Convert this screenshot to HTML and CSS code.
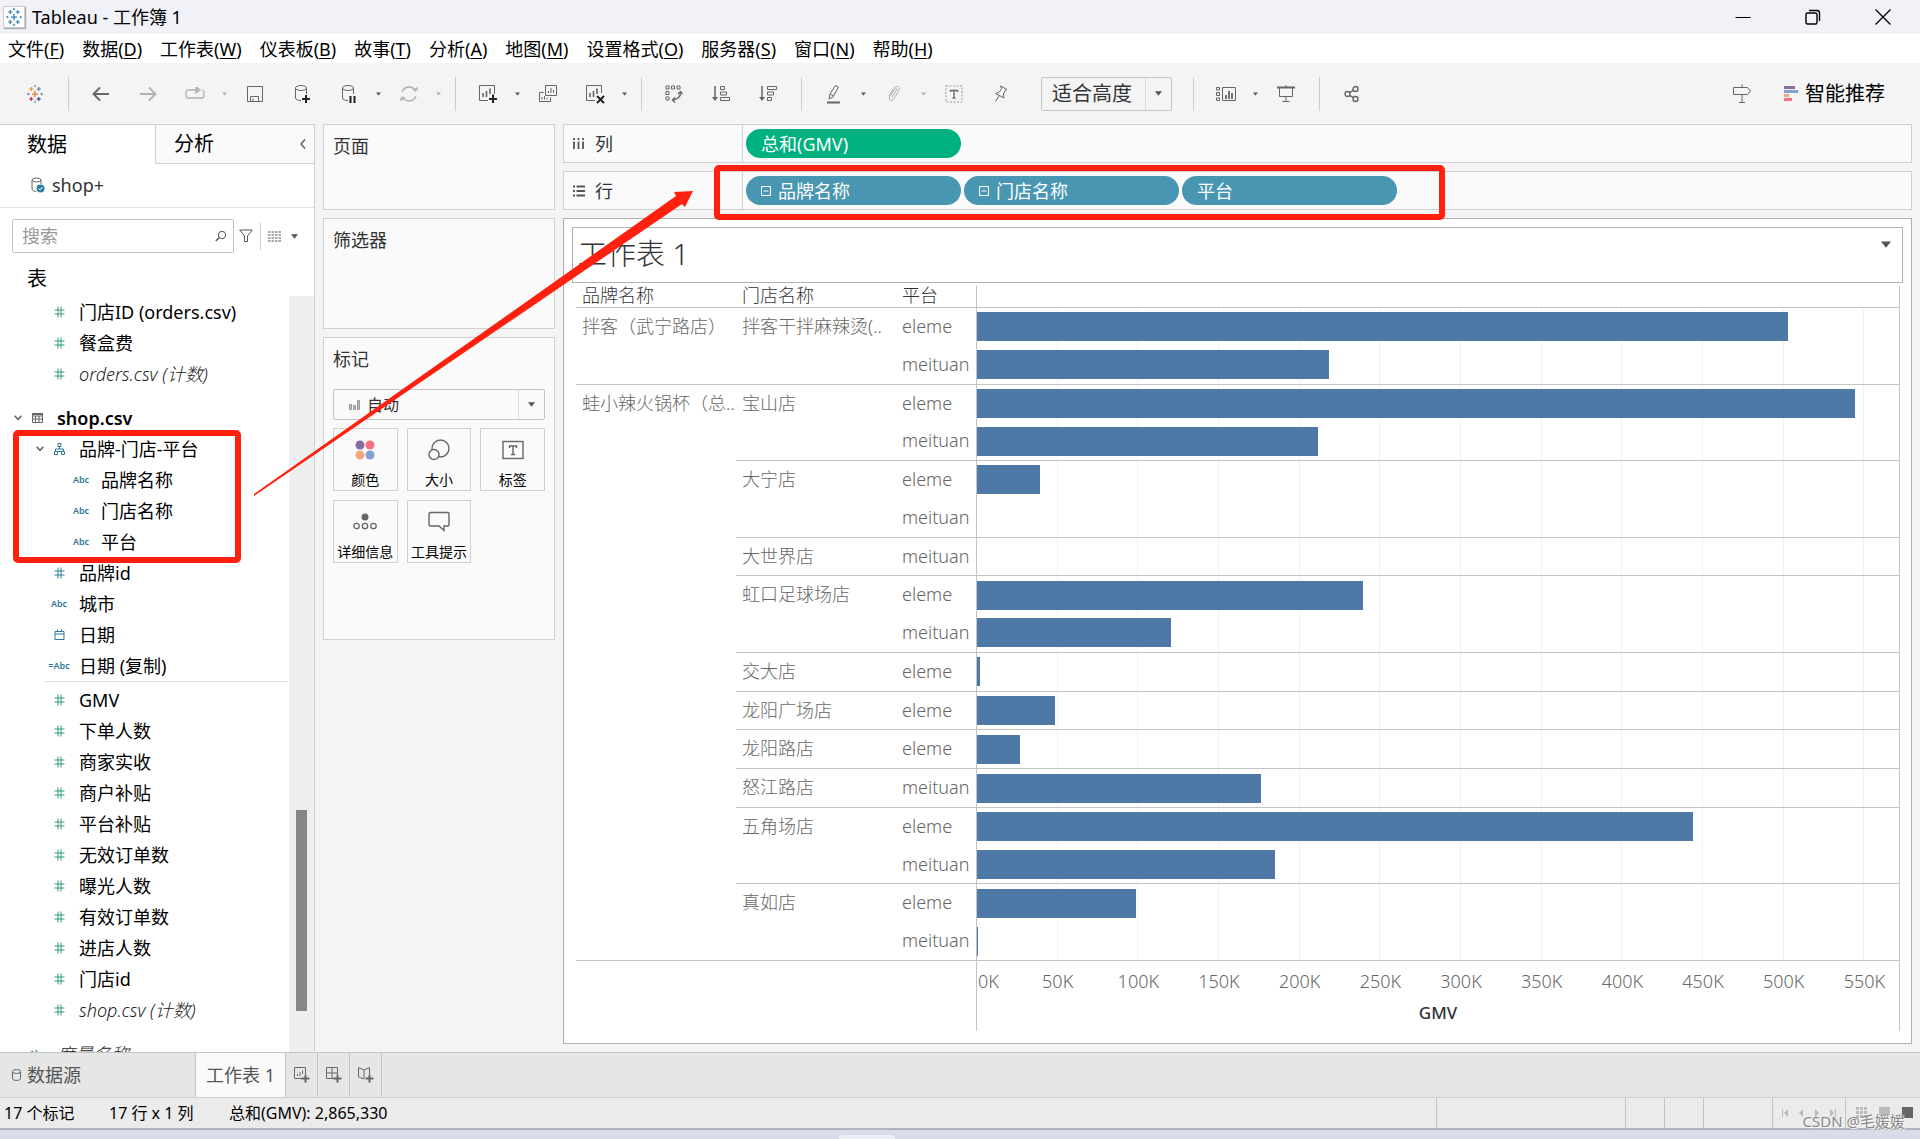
FILE: index.html
```html
<!DOCTYPE html>
<html lang="zh-CN">
<head>
<meta charset="utf-8">
<title>Tableau - 工作簿 1</title>
<link rel="stylesheet" href="styles.css">
</head>
<body>
<svg class="defs" aria-hidden="true">
  <symbol id="caret" viewBox="0 0 8 5"><path d="M0 0H8L4 5Z" fill="currentColor"/></symbol>
  <symbol id="hash" viewBox="0 0 10 12"><path d="M3.5 0.5V11.5M6.5 0.5V11.5M0 4H10M0 8H10" stroke="currentColor" fill="none"/></symbol>
  <symbol id="chev" viewBox="0 0 8 6"><path d="M0.7 0.8L4 4.4L7.3 0.8" stroke="#555" stroke-width="1.4" fill="none"/></symbol>
  <symbol id="minusbox" viewBox="0 0 10 10"><path d="M0.5 0.5H9.5V9.5H0.5ZM2.5 5H7.5" stroke="#fff" fill="none"/></symbol>
  <symbol id="logo" viewBox="0 0 20 24">
    <path d="M10 8V16M6.5 12H13.5" stroke="var(--c1,#e8762c)" stroke-width="1.5"/>
    <path d="M5.5 3.5V8.5M3 6H8" stroke="var(--c2,#eb912c)" stroke-width="1.4"/>
    <path d="M14.5 3.5V8.5M12 6H17" stroke="var(--c3,#59879b)" stroke-width="1.4"/>
    <path d="M5.5 15.5V20.5M3 18H8" stroke="var(--c4,#c72037)" stroke-width="1.4"/>
    <path d="M14.5 15.5V20.5M12 18H17" stroke="var(--c5,#1f457e)" stroke-width="1.4"/>
    <path d="M10 1V4M8.5 2.5H11.5M10 20V23M8.5 21.5H11.5" stroke="var(--c6,#7199a6)"/>
    <path d="M2 10.5V13.5M0.5 12H3.5M18 10.5V13.5M16.5 12H19.5" stroke="var(--c7,#5b6591)"/>
  </symbol>
</svg>

<div class="app">
  <header class="titlebar">
    <span class="appicon"><svg width="18" height="20"><use href="#logo"/></svg></span>
    <h1>Tableau - 工作簿 1</h1>
    <div class="winbtns">
      <button aria-label="最小化"><svg width="16" height="16" viewBox="0 0 16 16"><path d="M0.5 8.5H15.5" stroke="#000"/></svg></button>
      <button aria-label="还原"><svg width="16" height="16" viewBox="0 0 16 16" fill="none" stroke="#000" stroke-width="1.4"><rect x="1" y="4" width="11" height="11" rx="1.5"/><path d="M4 1.5H12Q14.5 1.5 14.5 4V12"/></svg></button>
      <button aria-label="关闭"><svg width="16" height="16" viewBox="0 0 16 16"><path d="M0.5 0.5L15.5 15.5M15.5 0.5L0.5 15.5" stroke="#000" stroke-width="1.3"/></svg></button>
    </div>
  </header>

  <nav class="menubar">
    <button>文件(<u>F</u>)</button><button>数据(<u>D</u>)</button><button>工作表(<u>W</u>)</button><button>仪表板(<u>B</u>)</button><button>故事(<u>T</u>)</button><button>分析(<u>A</u>)</button><button>地图(<u>M</u>)</button><button>设置格式(<u>O</u>)</button><button>服务器(<u>S</u>)</button><button>窗口(<u>N</u>)</button><button>帮助(<u>H</u>)</button>
  </nav>

  <div class="toolbar">
    <button class="tool" aria-label="起始页"><svg width="18" height="20"><use href="#logo"/></svg></button>
    <i class="sep"></i>
    <button class="tool" aria-label="撤消"><svg width="18" height="16" viewBox="0 0 18 16"><path d="M17 8H2M8 1.5L1.5 8L8 14.5" stroke-width="2"/></svg></button>
    <button class="tool off" aria-label="重做"><svg width="18" height="16" viewBox="0 0 18 16"><path d="M1 8H16M10 1.5L16.5 8L10 14.5" stroke-width="1.8"/></svg></button>
    <span class="split off"><button class="tool" aria-label="重播"><svg width="20" height="14" viewBox="0 0 20 14"><path d="M13 3H3.5Q1 3 1 5.5V8.5Q1 11 3.5 11H16.5Q19 11 19 8.5V5.5Q19 4 17.5 3.4M11 0V6L15 3Z" stroke-width="1.3"/></svg></button><button class="drop" aria-label="更多"><svg><use href="#caret"/></svg></button></span>
    <button class="tool" aria-label="保存"><svg width="16" height="16" viewBox="0 0 16 16"><path d="M0.5 0.5H15.5V15.5H0.5ZM3.5 15V10.5H11.5V15M6 12.5V15"/></svg></button>
    <button class="tool" aria-label="新建数据源"><svg width="16" height="20" viewBox="0 0 16 20"><ellipse cx="7" cy="4" rx="5.5" ry="2.5"/><path d="M1.5 4V14Q2 16.5 7 16.5M12.5 4V10"/><path d="M12 11V19M8 15H16" stroke="#222" stroke-width="2"/></svg></button>
    <span class="split"><button class="tool" aria-label="暂停更新"><svg width="16" height="20" viewBox="0 0 16 20"><ellipse cx="7" cy="4" rx="5.5" ry="2.5"/><path d="M1.5 4V14Q2 16.5 7 16.5M12.5 4V10"/><path d="M9.5 12V19M13.5 12V19" stroke="#222" stroke-width="2"/></svg></button><button class="drop" aria-label="更多"><svg><use href="#caret"/></svg></button></span>
    <span class="split off"><button class="tool" aria-label="运行更新"><svg width="18" height="16" viewBox="0 0 18 16"><path d="M2 6Q4 1 9 1Q13.5 1 15.5 5.5M16 10Q14 15 9 15Q4.5 15 2.5 10.5" stroke-width="1.4"/><path d="M12.5 4.5H17.5V0.5ZM5.5 11.5H0.5V15.5Z" fill="currentColor" stroke="none"/></svg></button><button class="drop" aria-label="更多"><svg><use href="#caret"/></svg></button></span>
    <i class="sep"></i>
    <span class="split"><button class="tool" aria-label="新建工作表"><svg width="20" height="20" viewBox="0 0 20 20"><path d="M10 16.5H1.5V1.5H16.5V10"/><path d="M5 13V9M8.5 13V7M12 10V4.5" stroke-width="1.6"/><path d="M15 10.5V19M11 15H19" stroke="#222" stroke-width="2"/></svg></button><button class="drop" aria-label="更多"><svg><use href="#caret"/></svg></button></span>
    <button class="tool" aria-label="复制工作表"><svg width="18" height="18" viewBox="0 0 18 18"><path d="M6.5 0.5H17.5V10.5H6.5ZM4.5 7.5H0.5V16.5H11.5V12.5M9.5 8V6M12 8V3M14.5 8V5M3 14.5V12M5.5 14.5V11M8 14.5V12.5"/></svg></button>
    <span class="split"><button class="tool" aria-label="清除工作表"><svg width="20" height="20" viewBox="0 0 20 20"><path d="M10 16.5H1.5V1.5H16.5V9"/><path d="M5 13V9M8.5 13V7M12 10V4.5" stroke-width="1.6"/><path d="M12 12L19 19M19 12L12 19" stroke="#222" stroke-width="2"/></svg></button><button class="drop" aria-label="更多"><svg><use href="#caret"/></svg></button></span>
    <i class="sep"></i>
    <button class="tool" aria-label="交换行和列"><svg width="18" height="18" viewBox="0 0 18 18"><path d="M1 1H4V4H1ZM6.5 1H9.5V4H6.5ZM12 1H15V4H12ZM1 6.5H4V9.5H1ZM1 12H4V15H1Z"/><path d="M15.5 7Q16 13.5 8 15M13 9L15.5 6.5L17.5 9M10 12.5L7.5 15L10 17.5" stroke-width="1.4"/></svg></button>
    <button class="tool" aria-label="升序排序"><svg width="18" height="18" viewBox="0 0 18 18"><path d="M3 1V15" stroke-width="1.5"/><path d="M0 12H6L3 16Z" fill="currentColor" stroke="none"/><path d="M8.5 1.5H12.5V4.5H8.5ZM8.5 7H14.5V10H8.5ZM8.5 12.5H17.5V15.5H8.5Z"/></svg></button>
    <button class="tool" aria-label="降序排序"><svg width="18" height="18" viewBox="0 0 18 18"><path d="M3 1V15" stroke-width="1.5"/><path d="M0 12H6L3 16Z" fill="currentColor" stroke="none"/><path d="M8.5 1.5H17.5V4.5H8.5ZM8.5 7H14.5V10H8.5ZM8.5 12.5H12.5V15.5H8.5Z"/></svg></button>
    <i class="sep"></i>
    <span class="split"><button class="tool" aria-label="突出显示"><svg width="16" height="20" viewBox="0 0 16 20"><path d="M3 15L4 10L9.5 1.5L12.5 3L7 13ZM4.5 10L7 12"/><path d="M1 18.5H14" stroke-width="2"/></svg></button><button class="drop" aria-label="更多"><svg><use href="#caret"/></svg></button></span>
    <span class="split off"><button class="tool" aria-label="组"><svg width="16" height="18" viewBox="0 0 16 18"><path d="M6 12L10.5 5Q11 3.5 9.5 3.5Q8.7 3.5 8 5L3.5 12Q2.5 15 4.5 15.5Q6.5 16 8 13.5L13 5.5Q14 2 11.5 1.5Q9 1 7.5 3.5L3 11"/></svg></button><button class="drop" aria-label="更多"><svg><use href="#caret"/></svg></button></span>
    <button class="tool" aria-label="显示标记标签"><svg width="18" height="18" viewBox="0 0 18 18"><rect x="1" y="1" width="16" height="16" stroke-dasharray="2 1.5" stroke="#999"/><path d="M5.5 7V5.5H12.5V7M9 5.5V13M7.5 13H10.5" stroke-width="1.3"/></svg></button>
    <button class="tool" aria-label="固定轴"><svg width="16" height="18" viewBox="0 0 16 18"><path d="M7.5 1L14 4.5L12 5.5L10.5 9L11 13L2.5 8.5L6.5 7L8.5 3.5ZM6 11L2.5 16.5"/></svg></button>
    <span class="fit"><select aria-label="适合"><option>适合高度</option></select><svg class="arrow"><use href="#caret"/></svg></span>
    <i class="sep roomy"></i>
    <span class="split"><button class="tool" aria-label="显示/隐藏卡"><svg width="20" height="16" viewBox="0 0 20 16"><path d="M6.5 1.5H19.5V14.5H6.5ZM0.5 1.5H3.5V4H0.5ZM0.5 6.5H3.5V9.5H0.5ZM0.5 12H3.5V14.5H0.5Z"/><path d="M10 13V9M13 13V5M16 13V7" stroke-width="1.8"/></svg></button><button class="drop" aria-label="更多"><svg><use href="#caret"/></svg></button></span>
    <button class="tool" aria-label="演示模式"><svg width="18" height="18" viewBox="0 0 18 18"><path d="M0 2.5H18" stroke-width="2"/><path d="M2.5 3V11.5H15.5V3M9 11.5V16.5M5.5 16.5H12.5M9 0V2"/></svg></button>
    <i class="sep"></i>
    <button class="tool" aria-label="共享"><svg width="16" height="18" viewBox="0 0 16 18"><g stroke-width="1.4"><circle cx="3.5" cy="9" r="2.5"/><circle cx="11.5" cy="4" r="2.5"/><circle cx="11.5" cy="14" r="2.5"/><path d="M5.6 7.6L9.4 5.4M5.6 10.4L9.4 12.6"/></g></svg></button>
    <button class="tool guide" aria-label="指南"><svg width="20" height="20" viewBox="0 0 20 20"><path d="M1.5 3.5H15.5L18.5 7L15.5 10.5H1.5ZM10 0.5V3.5M10 10.5V18.5M7 18.5H13"/></svg></button>
    <button class="showme"><svg width="14" height="16" viewBox="0 0 14 16"><path fill="#876d9c" d="M0 0H11V3H0Z"/><path fill="#7fa3cf" d="M0 4H14V7H0Z"/><path fill="#f3a77c" d="M0 8H5V11H0Z"/><path fill="#f86f83" d="M0 12H8V15H0Z"/></svg>智能推荐</button>
  </div>

  <main class="work">
    <aside class="side">
      <div class="tabs">
        <button class="tab on">数据</button>
        <button class="tab">分析<svg width="6" height="10" viewBox="0 0 6 10"><path d="M5 0.5L1 5L5 9.5" stroke="#555" fill="none" stroke-width="1.3"/></svg></button>
      </div>
      <a class="source" href="#"><svg width="14" height="16" viewBox="0 0 14 16" fill="none" stroke="#666"><ellipse cx="5.5" cy="3" rx="4.5" ry="2"/><path d="M1 3V12Q1.5 14.5 5 14.5M10 3V7"/><circle cx="9.5" cy="11.5" r="4" fill="#2f7f9f" stroke="none"/><path d="M7.5 11.5L9 13L11.5 10" stroke="#fff"/></svg>shop+</a>
      <div class="find">
        <label class="search"><input type="text" placeholder="搜索" aria-label="搜索"><svg width="12" height="12" viewBox="0 0 12 12" fill="none" stroke="#555"><circle cx="7" cy="5" r="3.7"/><path d="M4.2 7.6L0.8 11" stroke-width="1.4"/></svg></label>
        <button aria-label="筛选"><svg width="14" height="14" viewBox="0 0 14 14" fill="none" stroke="#555"><path d="M0.7 1H13.3L8.5 7V12.5H5.5V7Z"/></svg></button>
        <button class="viewmode" aria-label="视图"><svg width="13" height="11" viewBox="0 0 13 11"><path d="M0 1H13M0 4H13M0 7H13M0 10H13" stroke="#555" stroke-dasharray="2.5 1" stroke-width="1.2"/></svg><svg class="arrow"><use href="#caret"/></svg></button>
      </div>
      <h2>表</h2>
      <div class="fields">
        <div class="list">
          <ul>
            <li class="mea"><b></b><i><svg><use href="#hash"/></svg></i>门店ID (orders.csv)</li>
            <li class="mea"><b></b><i><svg><use href="#hash"/></svg></i>餐盒费</li>
            <li class="mea"><b></b><i><svg><use href="#hash"/></svg></i><em>orders.csv (计数)</em></li>
          </ul>
          <ul>
            <li class="table"><b><svg><use href="#chev"/></svg></b><i><svg viewBox="0 0 11 10"><path d="M0.5 0.5H10.5V9.5H0.5ZM0 3H11M0 6H11M3.5 3V10M7 3V10M0 1.5H11" stroke="#666" fill="none"/></svg></i><strong>shop.csv</strong></li>
            <li class="dim"><b><svg><use href="#chev"/></svg></b><i><svg viewBox="0 0 11 12"><path d="M4 0.5H7V3.5H4ZM5.5 3.5V6M1.5 8.5V6H9.5V8.5M0.5 8.5H3.5V11.5H0.5ZM7.5 8.5H10.5V11.5H7.5ZM4 8.5H7" stroke="currentColor" fill="none"/></svg></i>品牌-门店-平台</li>
            <li class="dim child"><b></b><i>Abc</i>品牌名称</li>
            <li class="dim child"><b></b><i>Abc</i>门店名称</li>
            <li class="dim child"><b></b><i>Abc</i>平台</li>
            <li class="dim"><b></b><i><svg><use href="#hash"/></svg></i>品牌id</li>
            <li class="dim"><b></b><i>Abc</i>城市</li>
            <li class="dim"><b></b><i><svg viewBox="0 0 10 12"><path d="M0.5 2.5H9.5V10.5H0.5ZM0.5 5H9.5M3 0.5V3M7 0.5V3" stroke="currentColor" fill="none"/></svg></i>日期</li>
            <li class="dim"><b></b><i>=Abc</i>日期 (复制)</li>
          </ul>
          <ul class="measures">
            <li class="mea"><b></b><i><svg><use href="#hash"/></svg></i>GMV</li>
            <li class="mea"><b></b><i><svg><use href="#hash"/></svg></i>下单人数</li>
            <li class="mea"><b></b><i><svg><use href="#hash"/></svg></i>商家实收</li>
            <li class="mea"><b></b><i><svg><use href="#hash"/></svg></i>商户补贴</li>
            <li class="mea"><b></b><i><svg><use href="#hash"/></svg></i>平台补贴</li>
            <li class="mea"><b></b><i><svg><use href="#hash"/></svg></i>无效订单数</li>
            <li class="mea"><b></b><i><svg><use href="#hash"/></svg></i>曝光人数</li>
            <li class="mea"><b></b><i><svg><use href="#hash"/></svg></i>有效订单数</li>
            <li class="mea"><b></b><i><svg><use href="#hash"/></svg></i>进店人数</li>
            <li class="mea"><b></b><i><svg><use href="#hash"/></svg></i>门店id</li>
            <li class="mea"><b></b><i><svg><use href="#hash"/></svg></i><em>shop.csv (计数)</em></li>
          </ul>
          <ul>
            <li class="dim table"><b></b><i>Abc</i><em>度量名称</em></li>
          </ul>
        </div>
        <div class="scroll"><div class="thumb"></div></div>
      </div>
    </aside>

    <div class="cards">
      <section class="card pages"><h3>页面</h3></section>
      <section class="card filters"><h3>筛选器</h3></section>
      <section class="card marks">
        <h3>标记</h3>
        <div class="marktype">
          <svg width="12" height="12" viewBox="0 0 12 12"><path d="M0.5 5.5H2.5V10.5H0.5ZM4.5 6.5H6.5V10.5H4.5ZM8.5 1.5H10.5V10.5H8.5Z" fill="#bbb" stroke="#999"/></svg>
          <select aria-label="标记类型"><option>自动</option></select><svg class="arrow"><use href="#caret"/></svg>
        </div>
        <div class="encodings">
          <button><svg width="24" height="24" viewBox="0 0 24 24"><circle cx="7" cy="7" r="4.5" fill="#876d9c"/><circle cx="17" cy="7" r="4.5" fill="#f86f83"/><circle cx="7" cy="17" r="4.5" fill="#f3a77c"/><circle cx="17" cy="17" r="4.5" fill="#7fa3cf"/></svg>颜色</button>
          <button><svg width="24" height="24" viewBox="0 0 24 24" fill="none" stroke="#666" stroke-width="1.4"><circle cx="13.5" cy="10.5" r="8.5"/><circle cx="7" cy="16.5" r="5" fill="#fafafa"/></svg>大小</button>
          <button><svg width="24" height="24" viewBox="0 0 24 24" fill="none" stroke="#666" stroke-width="1.4"><rect x="2" y="3.5" width="20" height="17"/><path d="M8.5 10V8H15.5V10M12 8V16.5M10 16.5H14"/></svg>标签</button>
          <button><svg width="24" height="24" viewBox="0 0 24 24" fill="none" stroke="#666" stroke-width="1.3"><circle cx="12" cy="7" r="3.5" fill="#666" stroke="none"/><circle cx="3.5" cy="16" r="2.7"/><circle cx="12" cy="16" r="2.7"/><circle cx="20.5" cy="16" r="2.7"/></svg>详细信息</button>
          <button><svg width="24" height="24" viewBox="0 0 24 24" fill="none" stroke="#666" stroke-width="1.4"><path d="M3.5 2.5H20.5Q22 2.5 22 4V14.5Q22 16 20.5 16H17V20.5L12 16H3.5Q2 16 2 14.5V4Q2 2.5 3.5 2.5Z"/></svg>工具提示</button>
        </div>
      </section>
    </div>

    <div class="sheet">
      <section class="shelf">
        <h3><svg width="12" height="12" viewBox="0 0 12 12"><path d="M1 3.5V11M5.5 3.5V11M10 3.5V11M1 0V2M5.5 0V2M10 0V2" stroke="#555" stroke-width="1.8"/></svg>列</h3>
        <div class="pills"><button class="pill green">总和(GMV)</button></div>
      </section>
      <section class="shelf">
        <h3><svg width="12" height="12" viewBox="0 0 12 12"><path d="M3.5 1.5H12M3.5 6H12M3.5 10.5H12M0 1.5H2M0 6H2M0 10.5H2" stroke="#555" stroke-width="1.8"/></svg>行</h3>
        <div class="pills"><button class="pill"><svg><use href="#minusbox"/></svg>品牌名称</button><button class="pill"><svg><use href="#minusbox"/></svg>门店名称</button><button class="pill">平台</button></div>
      </section>
      <section class="view">
        <div class="viewtitle"><h2>工作表 1</h2><svg class="arrow"><use href="#caret"/></svg></div>
        <div class="viz">
          <table>
            <colgroup><col class="name"><col class="name"><col class="platform"><col></colgroup>
            <thead><tr><th>品牌名称</th><th>门店名称</th><th>平台</th><th class="plot"></th></tr></thead>
            <tbody>
              <tr><td rowspan="2">拌客（武宁路店）</td><td rowspan="2">拌客干拌麻辣烫(..</td><td>eleme</td><td class="plot"><div class="bar" style="width:88%"></div></td></tr>
              <tr class="end"><td>meituan</td><td class="plot"><div class="bar" style="width:38.2%"></div></td></tr>
              <tr><td rowspan="15">蛙小辣火锅杯（总..</td><td rowspan="2">宝山店</td><td>eleme</td><td class="plot"><div class="bar" style="width:95.2%"></div></td></tr>
              <tr class="end"><td>meituan</td><td class="plot"><div class="bar" style="width:37%"></div></td></tr>
              <tr><td rowspan="2">大宁店</td><td>eleme</td><td class="plot"><div class="bar" style="width:6.83%"></div></td></tr>
              <tr class="end"><td>meituan</td><td class="plot"></td></tr>
              <tr class="end"><td>大世界店</td><td>meituan</td><td class="plot"></td></tr>
              <tr><td rowspan="2">虹口足球场店</td><td>eleme</td><td class="plot"><div class="bar" style="width:41.9%"></div></td></tr>
              <tr class="end"><td>meituan</td><td class="plot"><div class="bar" style="width:21.04%"></div></td></tr>
              <tr class="end"><td>交大店</td><td>eleme</td><td class="plot"><div class="bar" style="width:0.33%"></div></td></tr>
              <tr class="end"><td>龙阳广场店</td><td>eleme</td><td class="plot"><div class="bar" style="width:8.46%"></div></td></tr>
              <tr class="end"><td>龙阳路店</td><td>eleme</td><td class="plot"><div class="bar" style="width:4.66%"></div></td></tr>
              <tr class="end"><td>怒江路店</td><td>meituan</td><td class="plot"><div class="bar" style="width:30.85%"></div></td></tr>
              <tr><td rowspan="2">五角场店</td><td>eleme</td><td class="plot"><div class="bar" style="width:77.7%"></div></td></tr>
              <tr class="end"><td>meituan</td><td class="plot"><div class="bar" style="width:32.3%"></div></td></tr>
              <tr><td rowspan="2">真如店</td><td>eleme</td><td class="plot"><div class="bar" style="width:17.25%"></div></td></tr>
              <tr class="end"><td>meituan</td><td class="plot"><div class="bar" style="width:0.11%"></div></td></tr>
            </tbody>
            <tfoot><tr><td colspan="3"></td><td class="plot"><div class="ticks"><span>0K</span><span>50K</span><span>100K</span><span>150K</span><span>200K</span><span>250K</span><span>300K</span><span>350K</span><span>400K</span><span>450K</span><span>500K</span><span>550K</span></div><div class="axis">GMV</div></td></tr></tfoot>
          </table>
        </div>
      </section>
    </div>
  </main>

  <nav class="sheettabs">
    <button class="ds"><svg width="9" height="12" viewBox="0 0 9 12" fill="none" stroke="#666"><path d="M0.5 2.5Q0.5 0.5 4.5 0.5Q8.5 0.5 8.5 2.5V9.5Q8.5 11.5 4.5 11.5Q0.5 11.5 0.5 9.5ZM0.5 3Q1.5 4.5 4.5 4.5Q7.5 4.5 8.5 3"/></svg>数据源</button>
    <button class="ws">工作表 1</button>
    <button class="new" aria-label="新建工作表"><svg viewBox="0 0 16 16"><path d="M8 11.5H0.5V0.5H11.5V7M3.5 9V7M6 9V5M8.5 7V3.5"/><path d="M11.5 7.5V15.5M7.5 11.5H15.5" stroke-width="2"/></svg></button>
    <button class="new" aria-label="新建仪表板"><svg viewBox="0 0 16 16"><path d="M8 11.5H0.5V0.5H11.5V7M0.5 6H11.5M6 0.5V11.5"/><path d="M11.5 7.5V15.5M7.5 11.5H15.5" stroke-width="2"/></svg></button>
    <button class="new" aria-label="新建故事"><svg viewBox="0 0 16 16"><path d="M6 12L0.5 10V0.5L6 3L11.5 0.5V7M6 3V12"/><path d="M11.5 7.5V15.5M7.5 11.5H15.5" stroke-width="2"/></svg></button>
  </nav>

  <footer class="status">
    <span class="marksn">17 个标记</span><span class="rowsn">17 行 x 1 列</span><span>总和(GMV): 2,865,330</span>
    <div class="cells">
      <i class="c1"></i><i class="c2"></i><i class="c2"></i><i class="c3"></i>
      <div class="pager"><svg width="56" height="8" viewBox="0 0 56 8" fill="#bbb"><path d="M0 0H1V8H0ZM6 0V8L2 4ZM21 0V8L17 4ZM33 0V8L37 4ZM48 0V8L52 4ZM53 0H54V8H53Z"/></svg></div>
      <div class="modes"><svg width="58" height="12" viewBox="0 0 58 12"><path fill="#bbb" d="M0 0H3V3H0ZM4 0H7V3H4ZM8 0H11V3H8ZM0 4H3V7H0ZM4 4H7V7H4ZM8 4H11V7H8ZM0 8H3V11H0ZM4 8H7V11H4ZM8 8H11V11H8ZM23 0H34V8H23Z"/><path fill="#666" d="M46 0H57V11H46Z"/></svg></div>
    </div>
  </footer>
  <div class="desktop"><div class="pane"></div></div>
  <div class="mark">CSDN @毛媛媛</div>
  <svg class="notes" width="1460" height="580" fill="none" stroke="#ff2010" stroke-width="6">
    <rect x="16" y="433" width="222" height="127" rx="2"/>
    <rect x="717" y="168" width="725" height="49" rx="2"/>
    <path d="M254 494L676 196L674 192L693 191L685 207L682 204L254 496Z" fill="#ff2010" stroke="none"/>
  </svg>
</div>
</body>
</html>
```
FILE: styles.css
```css
* { box-sizing: border-box; }
body { margin: 0; background: #f4f4f4; color: #000; font: 18px/24px "Noto Sans", "Noto Sans CJK SC", sans-serif; }
h1, h2, h3, ul { margin: 0; padding: 0; font-weight: 400; font-size: 18px; }
ul { list-style: none; }
button { border: 0; background: none; padding: 0; font: inherit; color: inherit; }
select, input { font: inherit; color: inherit; border: 0; background: none; padding: 0; outline: 0; appearance: none; }
a { color: inherit; text-decoration: none; }
svg { display: block; flex: none; }
i, em { font-style: normal; }
.defs { position: absolute; width: 0; height: 0; }
.app { position: relative; display: flex; flex-direction: column; height: 100vh; min-height: 1000px; overflow: hidden; }
.arrow { width: 9px; height: 5px; color: #555; }

.titlebar { display: flex; align-items: center; height: 34px; flex: none; background: #f0f2f8; padding: 0 2px 0 3px; }
.appicon { display: grid; place-items: center; width: 22px; height: 22px; background: #fff; border: 1px solid #ccc; box-shadow: 1px 1px 1px #aaa; --c1: #2f7fb0; --c2: #2f7fb0; --c3: #2f7fb0; --c4: #2f7fb0; --c5: #2f7fb0; --c6: #2f7fb0; --c7: #2f7fb0; }
.titlebar h1 { margin-left: 7px; font-size: 18px; }
.winbtns { display: flex; margin-left: auto; }
.winbtns button { width: 70px; height: 34px; display: grid; place-items: center; }

.menubar { display: flex; gap: 18px; padding-left: 8px; height: 29px; align-items: center; background: #fff; flex: none; white-space: nowrap; }
.menubar u { text-underline-offset: 2px; }

.toolbar { display: flex; align-items: center; gap: 17px; height: 61px; flex: none; padding: 0 35px 0 20px; }
.tool { width: 30px; height: 30px; display: grid; place-items: center; color: #666; flex: none; }
.tool svg { fill: none; stroke: currentColor; }
.drop { width: 14px; height: 30px; display: grid; place-items: center; color: #555; }
.drop svg { width: 5px; height: 4px; }
.split { display: flex; gap: 7px; margin-right: -8px; }
.off .tool, .tool.off, .off .drop { color: #b0b0b0; }
.sep { width: 1px; height: 34px; margin-left: 1px; background: #ccc; flex: none; }
.sep.roomy { margin-left: 4px; }
.fit { display: flex; align-items: center; width: 131px; height: 34px; margin-left: 8px; border: 1px solid #c4c4c4; border-radius: 2px; font-size: 20px; color: #333; flex: none; }
.fit select { flex: 1; height: 32px; min-width: 0; padding-left: 10px; border-right: 1px solid #ddd; }
.fit .arrow { width: 7px; margin: 0 9px; }
.guide { margin-left: auto; }
.showme { display: flex; align-items: center; gap: 7px; margin-left: 10px; font-size: 20px; }

.work { display: flex; flex: 1; min-height: 0; }
.side { display: flex; flex-direction: column; width: 315px; flex: none; background: #fff; border-top: 1px solid #d0d0d0; border-right: 1px solid #d0d0d0; }
.tabs { display: flex; height: 39px; flex: none; }
.tab { width: 155px; padding: 0 0 0 27px; font-size: 20px; text-align: left; }
.tab + .tab { flex: 1; display: flex; align-items: center; justify-content: space-between; padding: 0 8px 0 18px; background: #fafafa; border: solid #d0d0d0; border-width: 0 0 1px 1px; }
.source { display: flex; align-items: center; gap: 7px; height: 44px; padding: 0 0 2px 31px; border-bottom: 1px solid #e2e2e2; color: #333; }
.find { display: flex; align-items: center; gap: 5px; height: 34px; margin: 11px 16px 0 12px; }
.search { display: flex; align-items: center; flex: 1; min-width: 0; height: 34px; padding: 0 6px 0 9px; border: 1px solid #c4c4c4; border-radius: 2px; }
.search input { flex: 1; min-width: 0; }
.search input::placeholder { color: #999; opacity: 1; }
.viewmode { display: flex; align-items: center; gap: 10px; height: 27px; flex: none; margin-left: 2px; padding-left: 7px; border-left: 1px solid #ccc; }
.viewmode .arrow { width: 7px; }
.side h2 { font-size: 20px; line-height: 32px; padding: 10px 0 1px 27px; }
.fields { display: flex; flex: 1; min-height: 0; }
.list { flex: 1; overflow: hidden; }
.list li { display: flex; align-items: center; height: 31px; padding-left: 33px; white-space: nowrap; }
.list li.table { padding-left: 11px; }
.list li.child { padding-left: 55px; }
.list b { width: 14px; display: grid; place-items: center; }
.list b svg { width: 8px; height: 6px; }
.list i { width: 24px; margin-right: 8px; display: flex; justify-content: center; font-size: 9px; font-weight: 600; }
.list i svg { width: 11px; height: 12px; }
.list em { font-style: italic; font-weight: 300; color: #222; }
.list strong { font-weight: 600; }
.list ul + ul { margin-top: 13px; }
.list ul + ul.measures { margin-top: 0; padding-top: 2px; }
.measures::before { content: ""; display: block; height: 1px; margin: -2px 1px 2px 44px; background: #ddd; }
.dim i { color: #2f7898; }
.mea i { color: #2f9c78; }
.scroll { width: 25px; background: #efefef; padding: 514px 7px 0; }
.thumb { height: 201px; background: #868686; }

.cards { display: flex; flex-direction: column; gap: 8px; width: 232px; margin-left: 8px; flex: none; color: #333; }
.card { border: 1px solid #d0d0d0; background: #fafafa; padding: 9px; }
.pages { height: 86px; }
.filters { height: 111px; }
.marks { height: 303px; }
.marktype { display: flex; align-items: center; height: 31px; margin-top: 18px; padding-left: 15px; border: 1px solid #c4c4c4; border-radius: 2px; font-size: 16px; }
.marktype select { flex: 1; height: 29px; padding-left: 6px; border-right: 1px solid #ddd; }
.marktype .arrow { width: 7px; margin: 0 9px; }
.encodings { display: grid; grid-template-columns: repeat(3, 1fr); gap: 9px; margin-top: 8px; }
.encodings button { display: flex; flex-direction: column; align-items: center; height: 63px; padding-top: 9px; border: 1px solid #d0d0d0; font-size: 14px; line-height: 20px; gap: 8px; color: #000; white-space: nowrap; }

.sheet { display: flex; flex-direction: column; gap: 8px; flex: 1; min-width: 0; margin: 0 8px 8px; }
.shelf { display: flex; height: 39px; flex: none; border: 1px solid #d0d0d0; background: #fafafa; }
.shelf h3 { display: flex; align-items: center; gap: 10px; width: 179px; padding-left: 9px; border-right: 1px solid #d0d0d0; color: #333; }
.pills { display: flex; gap: 3px; padding: 4px 3px; }
.pill { display: flex; align-items: center; gap: 7px; width: 215px; height: 29px; padding: 0 15px; border-radius: 15px; background: #4996b2; color: #fff; }
.pill svg { width: 10px; height: 10px; }
.green { background: #00b180; }
.view { display: flex; flex-direction: column; flex: 1; min-height: 0; border: 1px solid #b0b0b0; background: #fff; padding: 8px; }
.viewtitle { display: flex; justify-content: space-between; height: 56px; flex: none; padding: 6px 11px 0 5px; border: 1px solid #b0b0b0; }
.viewtitle h2 { font-size: 29px; line-height: 40px; font-weight: 300; color: #333; }
.viewtitle .arrow { margin-top: 7px; width: 10px; height: 7px; }
.viz { flex: 1; min-height: 0; padding: 3px 3px 4px 4px; }
table { width: 100%; height: 100%; border-spacing: 0; table-layout: fixed; font-weight: 300; color: #666; }
.name { width: 160px; }
.platform { width: 80px; }
th, td { padding: 0 0 0 6px; text-align: left; vertical-align: top; white-space: nowrap; line-height: 37px; }
th { height: 22px; line-height: 18px; font-weight: 300; color: #333; border-bottom: 1px solid #c4c4c4; }
.end td, tbody td[rowspan] { border-bottom: 1px solid #c4c4c4; }
.plot { padding: 0; border-left: 1px solid #c4c4c4; border-right: 1px solid #c4c4c4; }
tbody .plot { vertical-align: middle; background: repeating-linear-gradient(to right, transparent 0 calc(8.75% - 1px), #f0f0f0 calc(8.75% - 1px) 8.75%); }
.bar { height: 29px; background: #4e79a7; }
tfoot td { height: 70px; }
.ticks { display: flex; line-height: 40px; }
.ticks span { width: 8.75%; flex: none; text-align: center; }
.ticks span:first-child { width: 4.375%; padding-left: 1px; text-align: left; }
.axis { text-align: center; font-size: 17px; line-height: 24px; font-weight: 500; color: #333; }

.sheettabs { display: flex; height: 45px; flex: none; background: #e6e6e6; border-top: 1px solid #c4c4c4; color: #555; }
.sheettabs button { border-right: 1px solid #c4c4c4; }
.sheettabs .ds { display: flex; align-items: center; gap: 6px; width: 196px; padding-left: 12px; }
.ws { width: 90px; background: #fafafa; }
.new { width: 32px; display: grid; place-items: center; }
.new svg { width: 16px; height: 16px; fill: none; stroke: #666; }
.status { display: flex; align-items: center; height: 31px; flex: none; padding-left: 4px; background: #ebebeb; border-top: 1px solid #d0d0d0; font-size: 16px; }
.marksn { width: 105px; }
.rowsn { width: 120px; }
.cells { display: flex; align-self: stretch; margin-left: auto; }
.cells > * { border-left: 1px solid #c4c4c4; }
.c1 { width: 189px; }
.c2 { width: 39px; }
.c3 { width: 69px; }
.pager { width: 73px; padding: 11px 0 0 9px; }
.modes { width: 75px; padding: 9px 0 0 10px; }
.desktop { display: flex; justify-content: center; height: 11px; flex: none; padding-top: 5px; background: #dadcea; border-top: 2px solid #b0b2bc; }
.pane { width: 56px; height: 4px; margin-right: 186px; border-radius: 4px 4px 0 0; background: #eceef6; }
.mark { position: absolute; right: 15px; bottom: 7px; font-size: 15px; line-height: 22px; color: #888; text-shadow: 1px 1px 1px #fff; }
.notes { position: absolute; left: 0; top: 0; pointer-events: none; }
```
